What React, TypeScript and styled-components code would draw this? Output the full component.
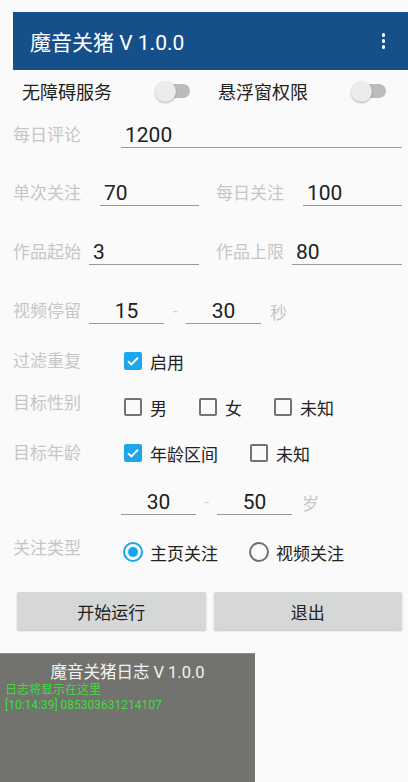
import React from 'react'
import styled, { createGlobalStyle } from 'styled-components'

const GlobalStyle = createGlobalStyle`
  html, body {
    margin: 0;
    padding: 0;
    background: #fafafa;
  }
  body {
    width: 408px;
    height: 782px;
    overflow: hidden;
    font-family: Roboto, "Noto Sans CJK SC", sans-serif;
  }
  * { box-sizing: border-box; }
`

const Screen = styled.div`
    position: relative;
    height: 782px;
    padding: 12px 0 0 13px;
`

const AppBar = styled.header`
    height: 58px;
    background: #16508b;
    color: #fff;
    display: flex;
    align-items: center;
    justify-content: space-between;
    padding: 0 23px 0 17px;
`

const Title = styled.h1`
    margin: 0;
    font-size: 21px;
    font-weight: 400;
`

const MenuDots = styled.div`
    display: flex;
    flex-direction: column;
    gap: 2.5px;
`

const Dot = styled.span`
    width: 3.5px;
    height: 3.5px;
    border-radius: 50%;
    background: #fff;
`

const Form = styled.main`
    display: flex;
    flex-direction: column;
    padding-right: 6px;
`

const Row = styled.div<{ $mt: number }>`
    display: flex;
    align-items: center;
    height: 30px;
    margin-top: ${p => p.$mt}px;
`

const SwitchRow = styled(Row)`
    padding-left: 9px;
    gap: 28px;
`

const SwitchItem = styled.div`
    width: 168px;
    display: flex;
    align-items: center;
    justify-content: space-between;
    font-size: 18px;
    color: #212121;
`

const Switch = styled.span`
    position: relative;
    width: 34px;
    height: 20px;
    display: flex;
    align-items: center;

    &::before {
        content: '';
        width: 100%;
        height: 14px;
        border-radius: 7px;
        background: #bcbcbc;
    }
    &::after {
        content: '';
        position: absolute;
        left: -1px;
        top: 0;
        width: 21px;
        height: 21px;
        border-radius: 50%;
        background: #ececec;
        box-shadow: 0 1px 2px rgba(0, 0, 0, 0.3);
    }
`

const Half = styled.div`
    width: 186px;
    display: flex;
    align-items: center;
`

const Halves = styled.div`
    display: flex;
    gap: 17px;
    width: 100%;
`

const Label = styled.span<{ $w: number; $up?: boolean }>`
    width: ${p => p.$w}px;
    flex-shrink: 0;
    font-size: 17px;
    line-height: 24px;
    color: #c6c6c6;
    margin-bottom: ${p => (p.$up ? 4 : 0)}px;
`

const Field = styled.input<{ $w?: number; $center?: boolean }>`
    flex: ${p => (p.$w ? `0 0 ${p.$w}px` : '1 1 0')};
    min-width: 0;
    height: 26px;
    padding: 0 4px;
    border: none;
    border-bottom: 1.5px solid #9a9a9a;
    background: transparent;
    font-family: Roboto, sans-serif;
    font-size: 21px;
    color: #212121;
    text-align: ${p => (p.$center ? 'center' : 'left')};
    outline: none;
`

const Dash = styled.span<{ $w: number }>`
    width: ${p => p.$w}px;
    text-align: center;
    font-size: 17px;
    color: #cfcfcf;
`

const Unit = styled.span<{ $ml: number }>`
    margin-left: ${p => p.$ml}px;
    font-size: 17px;
    color: #c6c6c6;
`

const Options = styled.div<{ $down?: boolean }>`
    display: flex;
    align-items: center;
    margin-top: ${p => (p.$down ? 4 : 0)}px;
`

const Option = styled.label<{ $w?: number }>`
    width: ${p => (p.$w ? `${p.$w}px` : 'auto')};
    display: flex;
    align-items: center;
    gap: 8px;
    font-size: 17px;
    color: #212121;
`

const Box = styled.span<{ $on?: boolean }>`
    width: 18px;
    height: 18px;
    flex-shrink: 0;
    border-radius: 2px;
    border: 2px solid ${p => (p.$on ? '#1ba7ee' : '#737373')};
    background: ${p => (p.$on ? '#1ba7ee' : 'transparent')};
    display: flex;
    align-items: center;
    justify-content: center;
`

const Radio = styled.span<{ $on?: boolean }>`
    width: 20px;
    height: 20px;
    margin-left: -1px;
    margin-right: -1px;
    flex-shrink: 0;
    border-radius: 50%;
    border: 2px solid ${p => (p.$on ? '#14a6f0' : '#6f6f6f')};
    display: flex;
    align-items: center;
    justify-content: center;

    &::after {
        content: '';
        width: 10px;
        height: 10px;
        border-radius: 50%;
        background: ${p => (p.$on ? '#14a6f0' : 'transparent')};
    }
`

const Buttons = styled.div`
    display: flex;
    gap: 8px;
    margin-top: 27px;
    padding-left: 4px;
`

const Button = styled.button`
    flex: 1;
    height: 38px;
    border: none;
    border-radius: 2px;
    background: #d6d7d7;
    box-shadow: 0 1px 2px rgba(0, 0, 0, 0.22);
    font-family: Roboto, "Noto Sans CJK SC", sans-serif;
    font-size: 17px;
    color: #212121;
`

const LogWindow = styled.section`
    position: absolute;
    left: 0;
    top: 653px;
    bottom: 0;
    width: 255px;
    background: #72726e;
    border-top: 1px solid #8c8c88;
    padding-top: 9px;
`

const LogTitle = styled.div`
    text-align: center;
    font-size: 16.5px;
    line-height: 20px;
    color: #f2f2f2;
`

const LogLine = styled.div`
    padding-left: 5px;
    font-size: 12px;
    line-height: 15px;
    color: #3fdc3f;
`

function Check() {
    return (
        <svg width="14" height="14" viewBox="0 0 14 14">
            <polyline points="2,7.2 5.4,10.4 12,3.6" fill="none" stroke="#fff" strokeWidth="2" />
        </svg>
    )
}

function CheckBox({ on, text, w }: { on?: boolean; text: string; w?: number }) {
    return (
        <Option $w={w}>
            <Box $on={on}>{on && <Check />}</Box>
            {text}
        </Option>
    )
}

function RadioOption({ on, text, w }: { on?: boolean; text: string; w?: number }) {
    return (
        <Option $w={w}>
            <Radio $on={on} />
            {text}
        </Option>
    )
}

export default function App() {
    return (
        <>
            <GlobalStyle />
            <Screen>
                <AppBar>
                    <Title>魔音关猪 V 1.0.0</Title>
                    <MenuDots>
                        <Dot />
                        <Dot />
                        <Dot />
                    </MenuDots>
                </AppBar>
                <Form>
                    <SwitchRow $mt={6}>
                        <SwitchItem>无障碍服务<Switch /></SwitchItem>
                        <SwitchItem>悬浮窗权限<Switch /></SwitchItem>
                    </SwitchRow>

                    <Row $mt={14}>
                        <Label $w={108}>每日评论</Label>
                        <Field defaultValue="1200" />
                    </Row>

                    <Row $mt={28}>
                        <Halves>
                            <Half>
                                <Label $w={87}>单次关注</Label>
                                <Field defaultValue="70" />
                            </Half>
                            <Half>
                                <Label $w={87}>每日关注</Label>
                                <Field defaultValue="100" />
                            </Half>
                        </Halves>
                    </Row>

                    <Row $mt={29}>
                        <Halves>
                            <Half>
                                <Label $w={76}>作品起始</Label>
                                <Field defaultValue="3" />
                            </Half>
                            <Half>
                                <Label $w={76}>作品上限</Label>
                                <Field defaultValue="80" />
                            </Half>
                        </Halves>
                    </Row>

                    <Row $mt={29}>
                        <Label $w={76}>视频停留</Label>
                        <Field $w={75} $center defaultValue="15" />
                        <Dash $w={22}>-</Dash>
                        <Field $w={75} $center defaultValue="30" />
                        <Unit $ml={9}>秒</Unit>
                    </Row>

                    <Row $mt={20}>
                        <Label $w={111}>过滤重复</Label>
                        <Options>
                            <CheckBox on text="启用" />
                        </Options>
                    </Row>

                    <Row $mt={14}>
                        <Label $w={111} $up>目标性别</Label>
                        <Options $down>
                            <CheckBox text="男" w={75} />
                            <CheckBox text="女" w={75} />
                            <CheckBox text="未知" />
                        </Options>
                    </Row>

                    <Row $mt={18}>
                        <Label $w={111}>目标年龄</Label>
                        <Options>
                            <CheckBox on text="年龄区间" w={126} />
                            <CheckBox text="未知" />
                        </Options>
                    </Row>

                    <Row $mt={19}>
                        <Label $w={108} />
                        <Field $w={75} $center defaultValue="30" />
                        <Dash $w={21}>-</Dash>
                        <Field $w={75} $center defaultValue="50" />
                        <Unit $ml={10}>岁</Unit>
                    </Row>

                    <Row $mt={18}>
                        <Label $w={111} $up>关注类型</Label>
                        <Options $down>
                            <RadioOption on text="主页关注" w={126} />
                            <RadioOption text="视频关注" />
                        </Options>
                    </Row>

                    <Buttons>
                        <Button>开始运行</Button>
                        <Button>退出</Button>
                    </Buttons>
                </Form>

                <LogWindow>
                    <LogTitle>魔音关猪日志 V 1.0.0</LogTitle>
                    <LogLine>日志将显示在这里</LogLine>
                    <LogLine>[10:14:39] 085303631214107</LogLine>
                </LogWindow>
            </Screen>
        </>
    )
}
